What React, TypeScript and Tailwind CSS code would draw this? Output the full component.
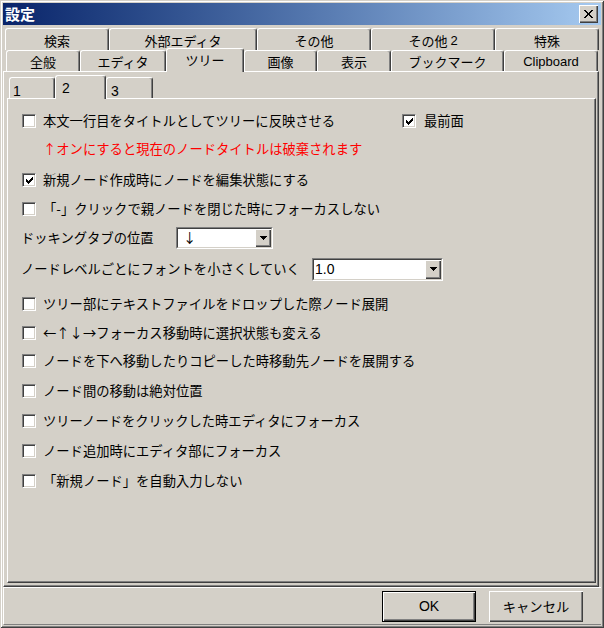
import React from 'react';

const px = (cells: [number, number][], w: number, h: number) => (
  <svg width={w} height={h} viewBox={`0 0 ${w} ${h}`} shapeRendering="crispEdges">
    {cells.map(([x, y]) => (
      <rect key={`${x}-${y}`} x={x} y={y} width={1} height={1} fill="#000" />
    ))}
  </svg>
);

const tickCells: [number, number][] = [
  [6, 0],
  [5, 1], [6, 1],
  [0, 2], [4, 2], [5, 2], [6, 2],
  [0, 3], [1, 3], [3, 3], [4, 3], [5, 3],
  [0, 4], [1, 4], [2, 4], [3, 4], [4, 4],
  [1, 5], [2, 5], [3, 5],
  [2, 6],
];

const closeCells: [number, number][] = [
  [0, 0], [1, 0], [7, 0], [8, 0],
  [1, 1], [2, 1], [6, 1], [7, 1],
  [2, 2], [3, 2], [5, 2], [6, 2],
  [3, 3], [4, 3], [5, 3],
  [3, 4], [4, 4], [5, 4],
  [2, 5], [3, 5], [5, 5], [6, 5],
  [1, 6], [2, 6], [6, 6], [7, 6],
  [0, 7], [1, 7], [7, 7], [8, 7],
];

const arrowCells: [number, number][] = [
  [0, 0], [1, 0], [2, 0], [3, 0], [4, 0], [5, 0], [6, 0],
  [1, 1], [2, 1], [3, 1], [4, 1], [5, 1],
  [2, 2], [3, 2], [4, 2],
  [3, 3],
];

function Check({ checked }: { checked?: boolean }) {
  return (
    <span className="flex h-[14px] w-[14px] shrink-0 items-center justify-center border border-t-[#808080] border-l-[#808080] border-b-white border-r-white bg-white shadow-[inset_1px_1px_0_#404040,inset_-1px_-1px_0_#d4d0c8]">
      {checked && px(tickCells, 7, 7)}
    </span>
  );
}

function CheckRow({ label, checked, className }: { label: string; checked?: boolean; className: string }) {
  return (
    <div className={className}>
      <Check checked={checked} />
      <span>{label}</span>
    </div>
  );
}

function Combo({ className, text, textClass }: { className: string; text: string; textClass: string }) {
  return (
    <div className={className}>
      <div className="flex flex-1 border border-t-[#404040] border-l-[#404040] border-b-[#d4d0c8] border-r-[#d4d0c8] bg-white">
        <div className={textClass}>{text}</div>
        <div className="flex w-[16px] items-center justify-center bg-[#d4d0c8] shadow-[inset_1px_1px_0_#fff,inset_-1px_-1px_0_#404040,inset_-2px_-2px_0_#808080]">
          {px(arrowCells, 7, 4)}
        </div>
      </div>
    </div>
  );
}

export default function App() {
  return (
    <div className="flex h-[628px] w-[604px] flex-col bg-[#d4d0c8] p-[3px] font-['Noto_Sans_CJK_JP',sans-serif] text-[13px] text-black shadow-[inset_1px_1px_0_#d4d0c8,inset_-1px_-1px_0_#404040,inset_2px_2px_0_#fff,inset_-2px_-2px_0_#808080]">
      {/* title bar */}
      <div className="flex h-[22px] items-center justify-between bg-linear-to-r from-[#0a246a] to-[#a6caf0] pl-[2px] pr-[3px]">
        <span className="text-[15px] font-bold leading-[18px] text-white">設定</span>
        <div className="flex h-[18px] w-[19px] items-center justify-center bg-[#d4d0c8] shadow-[inset_1px_1px_0_#fff,inset_-1px_-1px_0_#404040,inset_-2px_-2px_0_#808080]">
          {px(closeCells, 9, 8)}
        </div>
      </div>

      {/* tab row 1 */}
      <div className="mt-[3px] flex h-[22px] pl-[2px] leading-[16px]">
        <div className="flex w-[104px] items-center justify-center rounded-t-[3px] border-l border-t border-r border-l-white border-t-white border-r-[#404040] pt-[2px] shadow-[inset_-1px_0_0_#808080]">検索</div>
        <div className="flex w-[148px] items-center justify-center rounded-t-[3px] border-l border-t border-r border-l-white border-t-white border-r-[#404040] pt-[2px] shadow-[inset_-1px_0_0_#808080]">外部エディタ</div>
        <div className="flex w-[114px] items-center justify-center rounded-t-[3px] border-l border-t border-r border-l-white border-t-white border-r-[#404040] pt-[2px] shadow-[inset_-1px_0_0_#808080]">その他</div>
        <div className="flex w-[124px] items-center justify-center rounded-t-[3px] border-l border-t border-r border-l-white border-t-white border-r-[#404040] pt-[2px] shadow-[inset_-1px_0_0_#808080]">
          その他 <span className="ml-[3px] font-['Liberation_Sans',sans-serif]">2</span>
        </div>
        <div className="flex w-[104px] items-center justify-center rounded-t-[3px] border-l border-t border-r border-l-white border-t-white border-r-[#404040] pt-[2px] shadow-[inset_-1px_0_0_#808080]">特殊</div>
      </div>

      {/* tab row 2 */}
      <div className="flex h-[21px] pl-[3px] leading-[16px]">
        <div className="flex w-[74px] items-center justify-center rounded-t-[3px] border-l border-t border-r border-l-white border-t-white border-r-[#404040] pt-[2px] shadow-[inset_-1px_0_0_#808080]">全般</div>
        <div className="flex w-[86px] items-center justify-center rounded-t-[3px] border-l border-t border-r border-l-white border-t-white border-r-[#404040] pt-[2px] shadow-[inset_-1px_0_0_#808080]">エディタ</div>
        <div className="relative z-10 -mt-[2px] flex h-[24px] w-[78px] items-center justify-center rounded-t-[3px] border-l border-t border-r border-l-white border-t-white border-r-[#404040] bg-[#d4d0c8] pb-[2px] shadow-[inset_-1px_0_0_#808080]">ツリー</div>
        <div className="flex w-[73px] items-center justify-center rounded-t-[3px] border-l border-t border-r border-l-white border-t-white border-r-[#404040] pt-[2px] shadow-[inset_-1px_0_0_#808080]">画像</div>
        <div className="flex w-[74px] items-center justify-center rounded-t-[3px] border-l border-t border-r border-l-white border-t-white border-r-[#404040] pt-[2px] shadow-[inset_-1px_0_0_#808080]">表示</div>
        <div className="flex w-[113px] items-center justify-center rounded-t-[3px] border-l border-t border-r border-l-white border-t-white border-r-[#404040] pt-[2px] shadow-[inset_-1px_0_0_#808080]">ブックマーク</div>
        <div className="flex w-[94px] items-center justify-center rounded-t-[3px] border-l border-t border-r border-l-white border-t-white border-r-[#404040] pt-[2px] font-['Liberation_Sans',sans-serif] shadow-[inset_-1px_0_0_#808080]">Clipboard</div>
      </div>

      {/* outer panel */}
      <div className="flex h-[516px] w-[596px] flex-col border border-white border-r-[#404040] border-b-[#404040] pl-[3px] pt-[5px] shadow-[inset_-1px_-1px_0_#808080]">
        {/* sub tabs */}
        <div className="flex h-[21px] pl-[2px] font-['Liberation_Sans',sans-serif] text-[14px] leading-[16px]">
          <div className="flex w-[46px] items-center rounded-t-[3px] border-l border-t border-r border-l-white border-t-white border-r-[#404040] pl-[3px] pt-[5px] shadow-[inset_-1px_0_0_#808080]">1</div>
          <div className="relative z-10 -mt-[2px] flex h-[24px] w-[51px] items-center rounded-t-[3px] border-l border-t border-r border-l-white border-t-white border-r-[#404040] bg-[#d4d0c8] pl-[6px] pt-[1px] shadow-[inset_-1px_0_0_#808080]">2</div>
          <div className="flex w-[47px] items-center rounded-t-[3px] border-l border-t border-r border-l-white border-t-white border-r-[#404040] pl-[4px] pt-[5px] shadow-[inset_-1px_0_0_#808080]">3</div>
        </div>

        {/* inner panel */}
        <div className="flex h-[485px] w-[589px] flex-col border border-white border-r-[#404040] border-b-[#404040] text-[13.3px] leading-[20px] shadow-[inset_-1px_-1px_0_#808080]">
          <div className="mt-[12px] flex h-[20px] items-center pl-[14px]">
            <div className="flex w-[380px] items-center gap-[7px]">
              <Check />
              <span>本文一行目をタイトルとしてツリーに反映させる</span>
            </div>
            <div className="flex items-center gap-[8px]">
              <Check checked />
              <span>最前面</span>
            </div>
          </div>
          <div className="mt-[8px] h-[20px] pl-[35px] text-[#ff0000]">↑オンにすると現在のノードタイトルは破棄されます</div>
          <CheckRow checked className="mt-[11px] flex h-[20px] items-center gap-[7px] pl-[14px]" label="新規ノード作成時にノードを編集状態にする" />
          <CheckRow className="mt-[9px] flex h-[20px] items-center gap-[7px] pl-[14px]" label="「-」クリックで親ノードを閉じた時にフォーカスしない" />

          <div className="mt-[8px] flex h-[22px] items-center pl-[13px]">
            <span className="w-[155px]">ドッキングタブの位置</span>
            <Combo
              className="flex h-[22px] w-[97px] border border-t-[#808080] border-l-[#808080] border-b-white border-r-white"
              text="↓"
              textClass="flex-1 pl-[5px] leading-[18px]"
            />
          </div>
          <div className="mt-[9px] flex h-[22px] items-center pl-[13px]">
            <span className="w-[291px]">ノードレベルごとにフォントを小さくしていく</span>
            <Combo
              className="flex h-[23px] w-[131px] border border-t-[#808080] border-l-[#808080] border-b-white border-r-white"
              text="1.0"
              textClass="flex-1 pl-[1px] font-['Liberation_Sans',sans-serif] text-[14px] leading-[19px]"
            />
          </div>

          <CheckRow className="mt-[14px] flex h-[20px] items-center gap-[7px] pl-[14px]" label="ツリー部にテキストファイルをドロップした際ノード展開" />
          <CheckRow className="mt-[9px] flex h-[20px] items-center gap-[7px] pl-[14px]" label="←↑↓→フォーカス移動時に選択状態も変える" />
          <CheckRow className="mt-[8px] flex h-[20px] items-center gap-[7px] pl-[14px]" label="ノードを下へ移動したりコピーした時移動先ノードを展開する" />
          <CheckRow className="mt-[10px] flex h-[20px] items-center gap-[7px] pl-[14px]" label="ノード間の移動は絶対位置" />
          <CheckRow className="mt-[10px] flex h-[20px] items-center gap-[7px] pl-[14px]" label="ツリーノードをクリックした時エディタにフォーカス" />
          <CheckRow className="mt-[10px] flex h-[20px] items-center gap-[7px] pl-[14px]" label="ノード追加時にエディタ部にフォーカス" />
          <CheckRow className="mt-[10px] flex h-[20px] items-center gap-[7px] pl-[14px]" label="「新規ノード」を自動入力しない" />
        </div>
      </div>

      {/* button bar */}
      <div className="flex h-[38px] items-start justify-end gap-[13px] border-l border-t border-b border-l-white border-t-white border-b-[#808080] pr-[18px] pt-[3px]">
        <button className="flex h-[31px] w-[94px] items-center justify-center border border-black bg-[#d4d0c8] font-['Liberation_Sans',sans-serif] text-[14px] shadow-[inset_1px_1px_0_#fff,inset_-1px_-1px_0_#404040,inset_-2px_-2px_0_#808080]">
          OK
        </button>
        <button className="flex h-[31px] w-[94px] items-center justify-center bg-[#d4d0c8] text-[13.3px] shadow-[inset_1px_1px_0_#fff,inset_-1px_-1px_0_#404040,inset_-2px_-2px_0_#808080]">
          キャンセル
        </button>
      </div>
    </div>
  );
}
